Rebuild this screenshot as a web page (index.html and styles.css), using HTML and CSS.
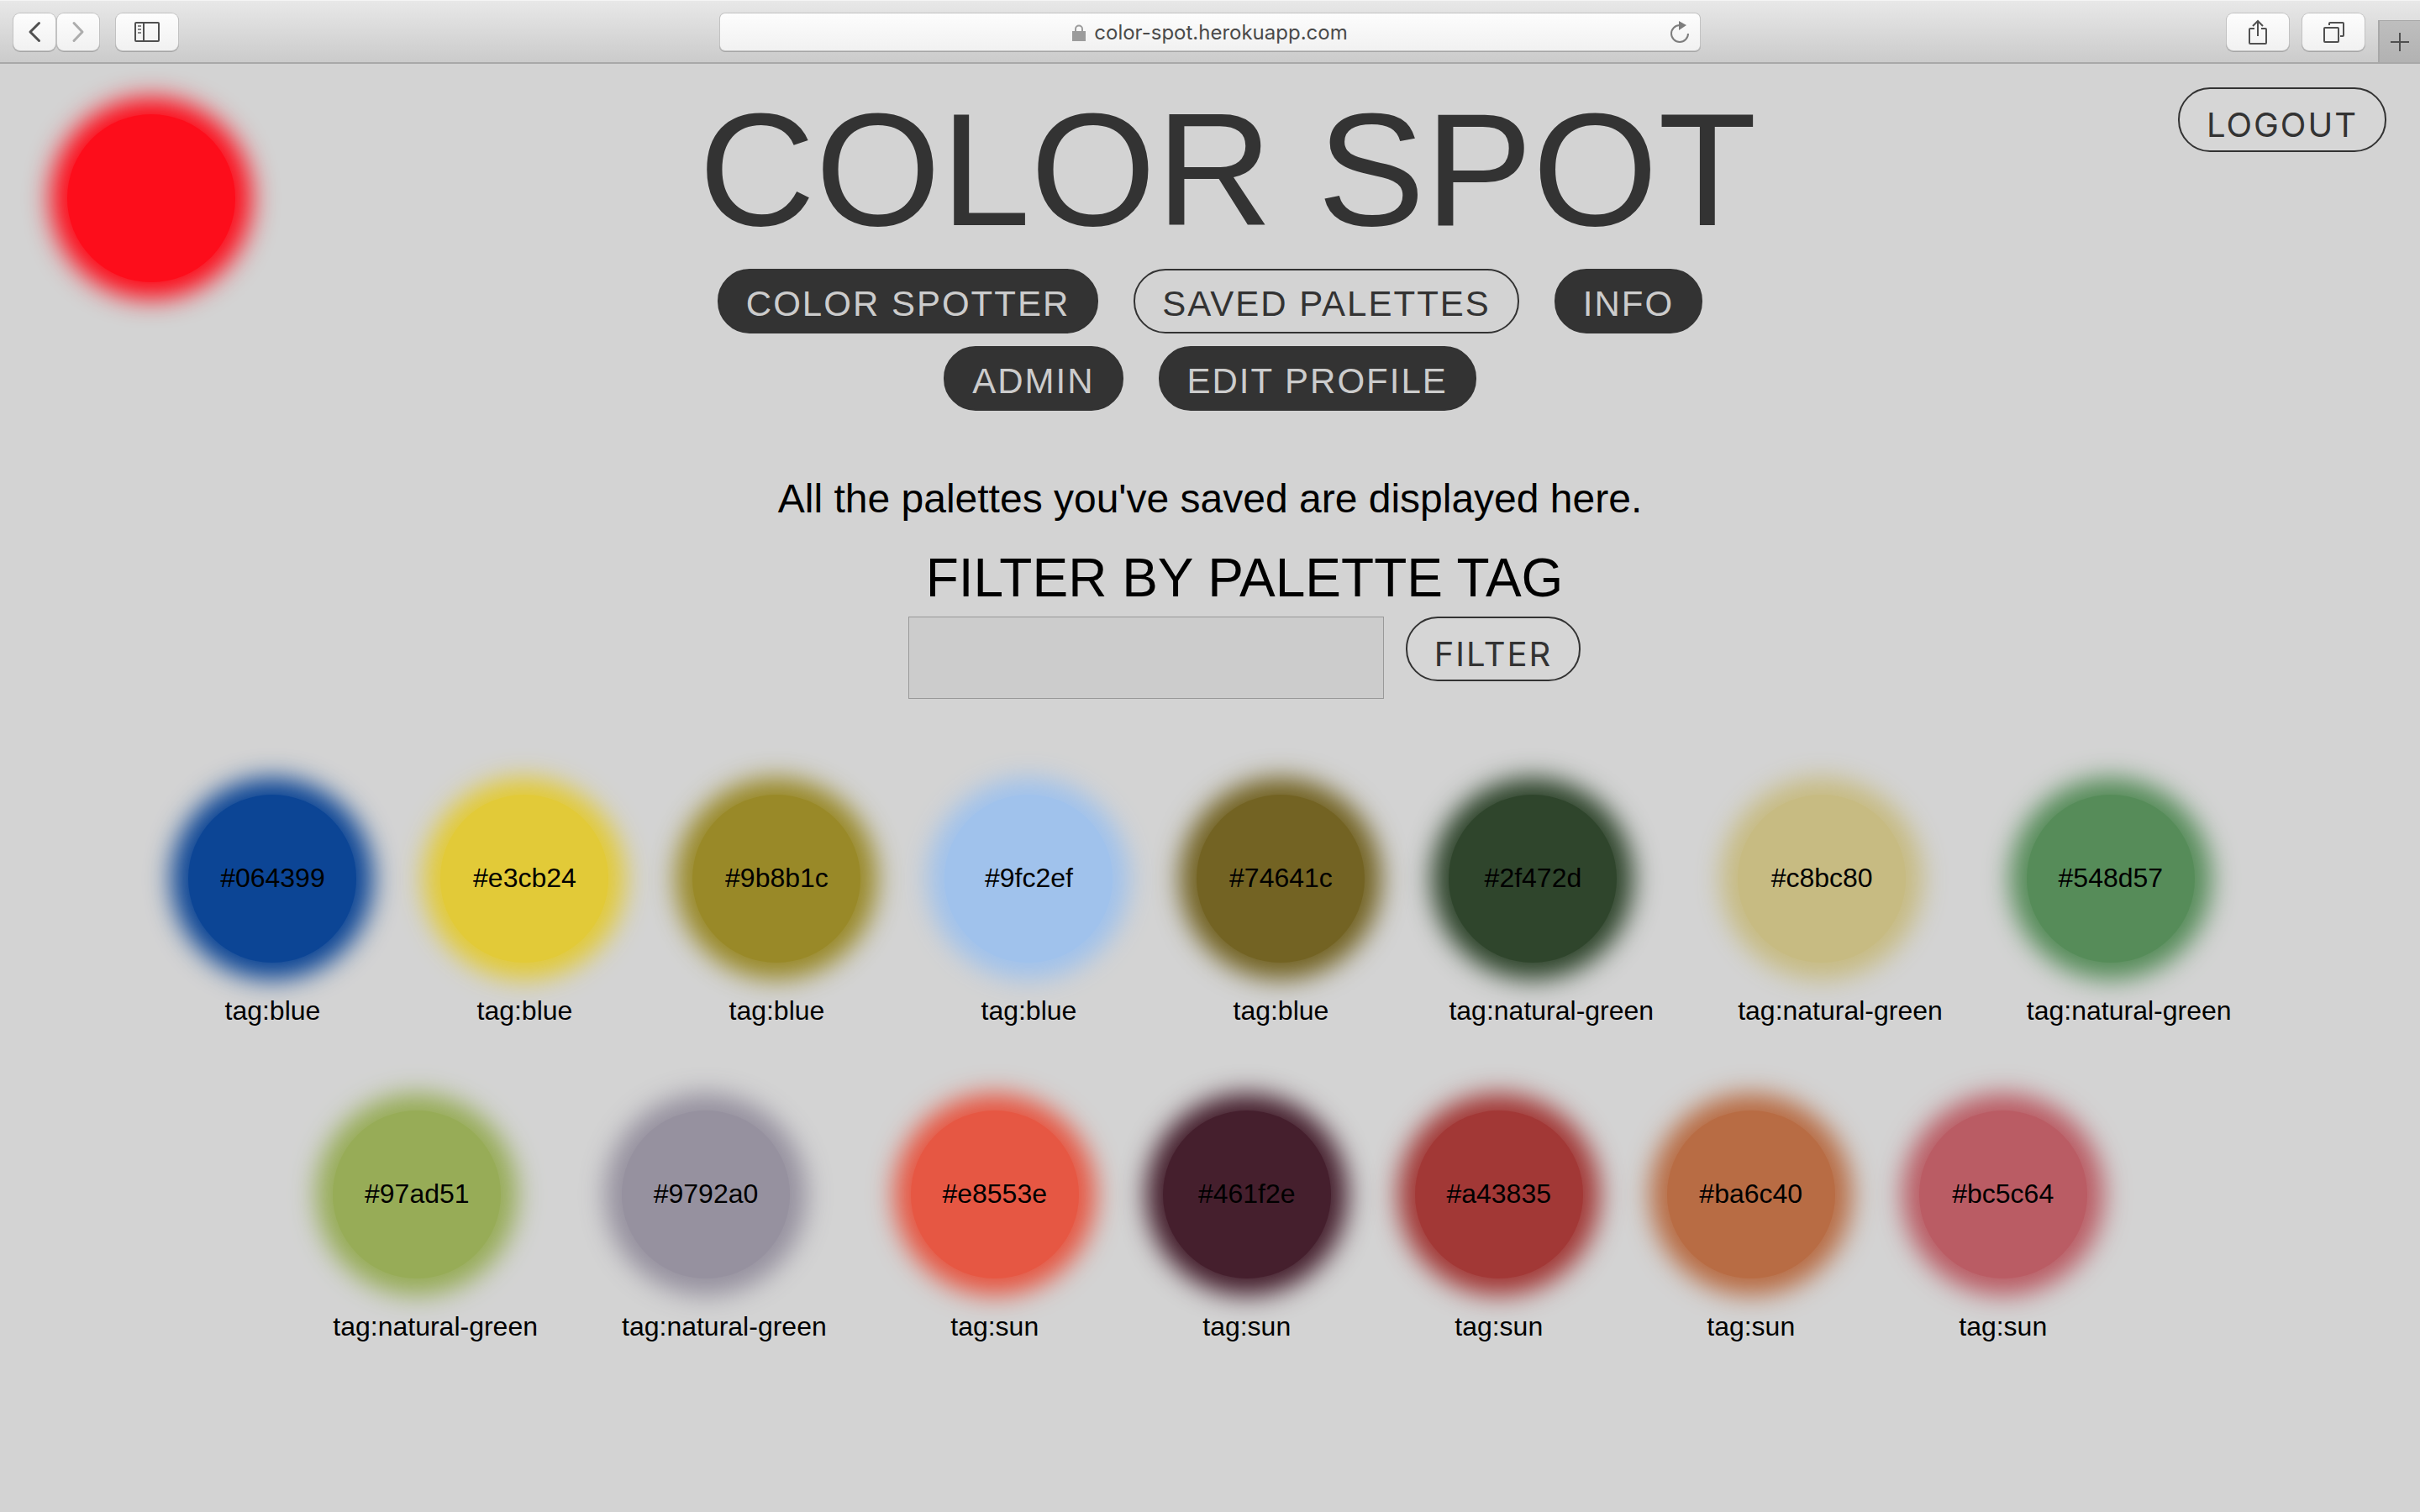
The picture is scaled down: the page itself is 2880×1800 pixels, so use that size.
FILE: index.html
```html
<!DOCTYPE html>
<html lang="en">
<head>
<meta charset="utf-8">
<meta name="viewport" content="width=device-width, initial-scale=1">
<title>Color Spot</title>
<link rel="stylesheet" href="styles.css">
</head>
<body>
<div class="toolbar">
  <div class="tools">
    <div class="history">
      <button class="tool tool-narrow" type="button" aria-label="Back"><svg width="16" height="26" viewBox="0 0 16 26"><path d="M13.500 2.500 3 13l10.500 10.500" fill="none" stroke="#505050" stroke-width="3" stroke-linecap="round" stroke-linejoin="round"/></svg></button>
      <button class="tool tool-narrow" type="button" aria-label="Forward"><svg width="16" height="26" viewBox="0 0 16 26"><path d="M3 2.500 13 13 3 23.500" fill="none" stroke="#adadad" stroke-width="3" stroke-linecap="round" stroke-linejoin="round"/></svg></button>
    </div>
    <button class="tool" type="button" aria-label="Show sidebar"><svg width="30" height="24" viewBox="0 0 30 24" fill="none"><rect x="1" y="1" width="28" height="22" rx="1" stroke="#505050" stroke-width="2"/><path d="M11 1v22" stroke="#505050" stroke-width="2"/><path d="M4 5h4M4 9h4M4 13h4" stroke="#858585" stroke-width="2"/></svg></button>
  </div>
  <div class="address">
    <span class="site"><svg width="16" height="20" viewBox="0 0 16 20"><path d="M4 9V5.500a4 4 0 0 1 8 0V9" fill="none" stroke="#9c9c9c" stroke-width="2"/><path d="M0 8h16v12H0z" fill="#9c9c9c"/></svg>color-spot.herokuapp.com</span>
    <button class="reload" type="button" aria-label="Reload"><svg width="24" height="28" viewBox="0 0 24 28"><path d="M12 6a10 10 0 1 0 10 10" fill="none" stroke="#7d7d7d" stroke-width="2"/><path d="M11 1l9 5-9 6z" fill="#7d7d7d"/></svg></button>
  </div>
  <div class="tools tools-end">
    <button class="tool" type="button" aria-label="Share"><svg width="24" height="32" viewBox="0 0 24 32" fill="none" stroke="#505050" stroke-width="2"><path d="M8 12H3q-1 0-1 1v16q0 1 1 1h18q1 0 1-1V13q0-1-1-1h-5M12 21V3M6 9l6-6 6 6"/></svg></button>
    <button class="tool" type="button" aria-label="Show tabs"><svg width="26" height="26" viewBox="0 0 26 26" fill="none" stroke="#505050" stroke-width="2"><rect x="2" y="8" width="17" height="17" rx="1"/><path d="M8 5V3q0-1 1-1h15q1 0 1 1v14q0 1-1 1h-3"/></svg></button>
    <button class="new-tab" type="button" aria-label="New tab"><svg width="22" height="22" viewBox="0 0 22 22"><path d="M11 0v22M0 11h22" stroke="#505050" stroke-width="2"/></svg></button>
  </div>
</div>

<header class="header">
  <div class="spot logo"></div>
  <h1 class="title">COLOR SPOT</h1>
  <button class="button logout" type="button">LOGOUT</button>
  <nav class="nav">
    <a class="pill" href="#spotter">COLOR SPOTTER</a>
    <a class="pill pill-current" href="#palettes" aria-current="page">SAVED PALETTES</a>
    <a class="pill" href="#info">INFO</a>
    <a class="pill" href="#admin">ADMIN</a>
    <a class="pill" href="#profile">EDIT PROFILE</a>
  </nav>
</header>

<main class="main">
  <p class="intro">All the palettes you've saved are displayed here.</p>
  <form class="filter">
    <label class="filter-label" for="tag">FILTER BY PALETTE TAG</label>
    <div class="filter-row">
      <input class="filter-input" id="tag" type="text">
      <button class="button" type="submit">FILTER</button>
    </div>
  </form>
  <ul class="palettes">
    <li class="palette"><div class="spot" style="--c:#0c4595">#064399</div><span>tag:blue</span></li>
    <li class="palette"><div class="spot" style="--c:#e2ca38">#e3cb24</div><span>tag:blue</span></li>
    <li class="palette"><div class="spot" style="--c:#998928">#9b8b1c</div><span>tag:blue</span></li>
    <li class="palette"><div class="spot" style="--c:#a0c2ec">#9fc2ef</div><span>tag:blue</span></li>
    <li class="palette"><div class="spot" style="--c:#736323">#74641c</div><span>tag:blue</span></li>
    <li class="palette"><div class="spot" style="--c:#2f452c">#2f472d</div><span>tag:natural-green</span></li>
    <li class="palette"><div class="spot" style="--c:#c7bb82">#c8bc80</div><span>tag:natural-green</span></li>
    <li class="palette"><div class="spot" style="--c:#568c59">#548d57</div><span>tag:natural-green</span></li>
    <li class="palette"><div class="spot" style="--c:#97ac57">#97ad51</div><span>tag:natural-green</span></li>
    <li class="palette"><div class="spot" style="--c:#96919f">#9792a0</div><span>tag:natural-green</span></li>
    <li class="palette"><div class="spot" style="--c:#e65743">#e8553e</div><span>tag:sun</span></li>
    <li class="palette"><div class="spot" style="--c:#451f2d">#461f2e</div><span>tag:sun</span></li>
    <li class="palette"><div class="spot" style="--c:#a23836">#a43835</div><span>tag:sun</span></li>
    <li class="palette"><div class="spot" style="--c:#b86c44">#ba6c40</div><span>tag:sun</span></li>
    <li class="palette"><div class="spot" style="--c:#ba5c64">#bc5c64</div><span>tag:sun</span></li>
  </ul>
</main>
</body>
</html>
```
FILE: styles.css
```css
* {
  box-sizing: border-box;
}

body {
  margin: 0;
  background: #d3d3d3;
  color: #000;
  font-family: "Liberation Sans", Arial, sans-serif;
  font-size: 32px;
  line-height: 36px;
}

button {
  margin: 0;
  padding: 0;
  border: 0;
  background: none;
  font: inherit;
  color: inherit;
}

svg {
  display: block;
}

/* Browser toolbar */
.toolbar {
  display: grid;
  grid-template-columns: 1fr 1166px 1fr;
  align-items: center;
  height: 76px;
  background: linear-gradient(#e8e8e8, #cbcbcb);
  border-top: 1px solid #f5f5f5;
  border-bottom: 2px solid #a8a8a8;
}

.tools {
  display: flex;
  align-items: center;
  gap: 20px;
  padding-left: 16px;
}

.tools-end {
  justify-content: flex-end;
  align-self: stretch;
  gap: 16px;
  padding-left: 0;
}

.history {
  display: flex;
  gap: 2px;
}

.tool {
  display: flex;
  align-items: center;
  justify-content: center;
  width: 74px;
  height: 44px;
  border-radius: 8px;
  background: linear-gradient(#fdfdfd, #f1f1f1);
  box-shadow: 0 0 0 1px #c2c2c2, 0 1px 0 1px #a5a5a5;
}

.tool-narrow {
  width: 50px;
}

.address {
  display: flex;
  align-items: center;
  height: 44px;
  padding: 0 12px 0 36px;
  border-radius: 6px;
  background: linear-gradient(#fdfdfd, #f1f1f1);
  box-shadow: 0 0 0 1px #c2c2c2, 0 1px 0 1px #a5a5a5;
}

.site {
  display: flex;
  flex: 1;
  align-items: center;
  justify-content: center;
  gap: 10px;
  padding-top: 2px;
  color: #4a4a4a;
  font-family: Inter, Roboto, sans-serif;
  font-size: 24px;
  line-height: 30px;
}

.new-tab {
  display: flex;
  align-self: flex-end;
  align-items: center;
  justify-content: center;
  width: 50px;
  height: 50px;
  border-top: 1px solid #a8a8a8;
  border-left: 2px solid #a8a8a8;
  background: linear-gradient(#bebebe, #b2b2b2);
}

/* Page header */
.header {
  display: grid;
  grid-template-columns: 1fr auto 1fr;
  align-items: start;
  row-gap: 10px;
  padding: 18px 40px 0;
}

.logo {
  --c: #fd0d1b;
  grid-area: 1 / 1 / 3 / 2;
  margin: 42px 0 0 40px;
}

.title {
  grid-area: 1 / 2;
  margin: 0;
  padding-left: 42px;
  color: #333;
  font-size: 192px;
  font-weight: 400;
  line-height: 216px;
}

.logout {
  grid-area: 1 / 3;
  justify-self: end;
  margin-top: 10px;
}

.nav {
  display: flex;
  flex-wrap: wrap;
  grid-area: 2 / 1 / 3 / 4;
  justify-content: center;
  justify-self: center;
  gap: 15px 42px;
  max-width: 1260px;
}

.pill {
  padding: 16px 32px 10px;
  border: 2px solid #333;
  border-radius: 38px;
  background: #333;
  color: #ccc;
  font-size: 42px;
  letter-spacing: 2px;
  line-height: 47px;
  text-decoration: none;
}

.pill-current {
  background: none;
  color: #333;
}

.button {
  padding: 19px 32px 6px;
  border: 2px solid #333;
  border-radius: 38px;
  background: #d6d6d6;
  color: #333;
  font-family: Inter, Roboto, sans-serif;
  font-size: 40px;
  letter-spacing: 2px;
  line-height: 48px;
}

/* Saved palettes */
.main {
  display: flex;
  flex-direction: column;
  align-items: center;
  padding: 78px 200px;
}

.intro {
  margin: 0 0 31px;
  font-size: 48px;
  line-height: 54px;
}

.filter {
  display: flex;
  flex-direction: column;
  align-items: center;
  gap: 10px;
  padding-left: 82px;
}

.filter-label {
  font-size: 64px;
  line-height: 72px;
}

.filter-row {
  display: flex;
  align-items: flex-start;
  gap: 26px;
}

.filter-input {
  width: 566px;
  height: 98px;
  padding: 0 24px;
  border: 1px solid #999;
  border-radius: 0;
  background: #ccc;
  font: inherit;
}

.palettes {
  display: flex;
  flex-wrap: wrap;
  justify-content: center;
  gap: 101px 100px;
  margin: 114px 0 0;
  padding: 0;
  list-style: none;
}

.palette {
  display: flex;
  flex-direction: column;
  gap: 39px;
  min-width: 200px;
  text-align: center;
}

.spot {
  display: flex;
  align-items: center;
  justify-content: center;
  width: 200px;
  height: 200px;
  padding-bottom: 2px;
  border-radius: 50%;
  background: var(--c);
  box-shadow: 0 0 30px 20px var(--c);
}
```
